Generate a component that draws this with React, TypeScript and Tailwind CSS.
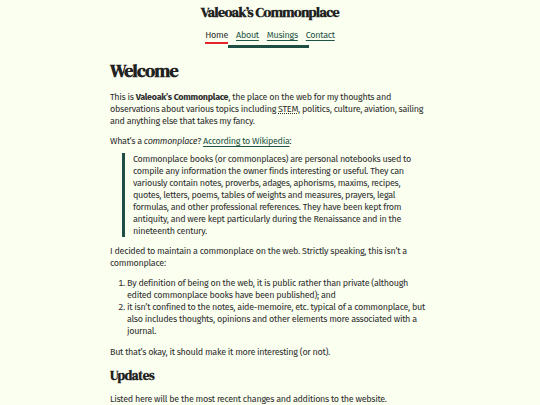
export default function App() {
  const body = { fontFamily: '"Fira Sans", Lato, "Noto Sans", sans-serif' }
  const serif = { fontFamily: '"DM Serif Display", "Liberation Serif", serif' }
  const link = 'text-[#1f5446] underline underline-offset-2 decoration-[1px]'

  return (
    <div className="min-h-[405px] w-[540px] bg-[#fbfff0] text-[#2e2e2e]" style={body}>
      <header className="flex flex-col items-center pt-[3px]">
        <h1 className="text-[14px] font-bold leading-[18px] tracking-[-0.5px] text-[#222222]" style={serif}>
          Valeoak’s Commonplace
        </h1>
        <nav className="relative mt-[8px] flex gap-[8px] text-[9px] leading-[12px] tracking-[-0.3px]">
          <a className="relative text-[#2e2e2e]">
            Home
            <span className="absolute left-0 right-0 top-[13px] h-[2px] bg-[#e3262e]" />
          </a>
          <a className={link}>About</a>
          <a className={link}>Musings</a>
          <a className={link}>Contact</a>
          <span className="absolute left-[23px] top-[16px] h-[3px] w-[81px] bg-[#1f4f44]" />
        </nav>
      </header>

      <main className="mx-auto mt-[18px] w-[320px] text-[9px] leading-[12px] tracking-[-0.3px]">
        <h2 className="text-[18px] font-bold leading-[24px] tracking-[-0.6px] text-[#222222]" style={serif}>
          Welcome
        </h2>
        <p className="mt-[8px]">
          This is <b className="font-bold">Valeoak’s Commonplace</b>, the place on the web for my thoughts and
          observations about various topics including <abbr className="underline decoration-dotted">STEM</abbr>,
          politics, culture, aviation, sailing and anything else that takes my fancy.
        </p>
        <p className="mt-[8px]">
          What’s a <i>commonplace</i>? <a className={link}>According to Wikipedia</a>:
        </p>
        <blockquote className="mt-[6px] ml-[12px] border-l-[3px] border-[#1f4f44] pl-[8px] pr-[16px]">
          Commonplace books (or commonplaces) are personal notebooks used to compile any information the owner finds
          interesting or useful. They can variously contain notes, proverbs, adages, aphorisms, maxims, recipes,
          quotes, letters, poems, tables of weights and measures, prayers, legal formulas, and other professional
          references. They have been kept from antiquity, and were kept particularly during the Renaissance and in
          the nineteenth century.
        </blockquote>
        <p className="mt-[8px]">
          I decided to maintain a commonplace on the web. Strictly speaking, this isn’t a commonplace:
        </p>
        <ol className="mt-[8px] list-decimal pl-[17px]">
          <li>
            By definition of being on the web, it is public rather than private (although edited commonplace books
            have been published); and
          </li>
          <li>
            it isn’t confined to the notes, aide-memoire, etc. typical of a commonplace, but also includes thoughts,
            opinions and other elements more associated with a journal.
          </li>
        </ol>
        <p className="mt-[9px]">But that’s okay, it should make it more interesting (or not).</p>
        <h3 className="mt-[9px] text-[13px] font-bold leading-[18px] tracking-[-0.3px] text-[#222222]" style={serif}>
          Updates
        </h3>
        <p className="mt-[8px]">Listed here will be the most recent changes and additions to the website.</p>
      </main>
    </div>
  )
}
